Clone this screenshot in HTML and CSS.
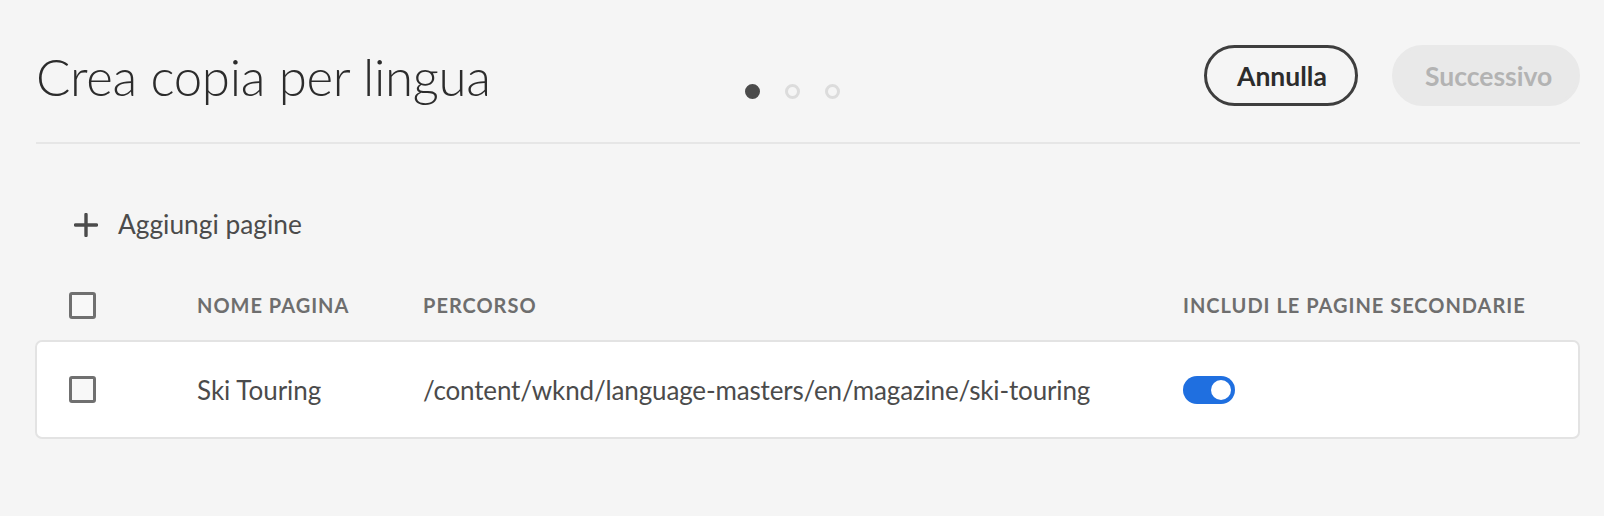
FILE: index.html
```html
<!DOCTYPE html>
<html lang="it">
<head>
<meta charset="utf-8">
<title>Crea copia per lingua</title>
<link rel="stylesheet" href="styles.css">
</head>
<body>
<div class="page">
  <header class="header">
    <h1 class="title">Crea copia per lingua</h1>
    <div class="steps">
      <span class="step step-active"></span>
      <span class="step"></span>
      <span class="step"></span>
    </div>
    <div class="actions">
      <button class="btn btn-outline">Annulla</button>
      <button class="btn btn-disabled" disabled>Successivo</button>
    </div>
  </header>
  <div class="divider"></div>

  <button class="add-pages">
    <svg class="add-icon" viewBox="0 0 24 24" width="24" height="24" aria-hidden="true">
      <path d="M12 1.5v21M1.5 12h21" stroke="#4b4b4b" stroke-width="3.4" stroke-linecap="round" fill="none"/>
    </svg>
    <span>Aggiungi pagine</span>
  </button>

  <div class="table">
    <div class="row row-head">
      <div class="cell cell-check"><span class="checkbox"></span></div>
      <div class="cell">NOME PAGINA</div>
      <div class="cell">PERCORSO</div>
      <div class="cell">INCLUDI LE PAGINE SECONDARIE</div>
    </div>
    <div class="row row-body">
      <div class="cell cell-check"><span class="checkbox"></span></div>
      <div class="cell">Ski Touring</div>
      <div class="cell cell-path">/content/wknd/language-masters/en/magazine/ski-touring</div>
      <div class="cell"><span class="switch"><span class="switch-knob"></span></span></div>
    </div>
  </div>
</div>
</body>
</html>
```

FILE: styles.css
```css
* { box-sizing: border-box; }

html, body {
  margin: 0;
  padding: 0;
  background: #f5f5f5;
}

body {
  font-family: Lato, "Open Sans", "Liberation Sans", sans-serif;
  color: #4b4b4b;
}

.page {
  padding: 45px 24px 0 35px;
}

.header {
  display: flex;
  align-items: flex-start;
}

.title {
  margin: 1px 0 0 1px;
  font-weight: 300;
  font-size: 51px;
  line-height: 62px;
  color: #2c2c2c;
  letter-spacing: -0.3px;
}

.steps {
  display: flex;
  gap: 25px;
  margin: 39px 0 0 254px;
}

.step {
  width: 15px;
  height: 15px;
  border-radius: 50%;
  border: 3px solid #dcdcdc;
}

.step-active {
  background: #4b4b4b;
  border-color: #4b4b4b;
}

.actions {
  margin-left: auto;
  display: flex;
  gap: 34px;
}

.btn {
  height: 61px;
  border-radius: 31px;
  font-family: Lato, "Open Sans", sans-serif;
  font-weight: 700;
  font-size: 26.5px;
  padding: 0 30px;
  border: 3px solid transparent;
}

.btn-outline {
  width: 154px;
  background: transparent;
  border-color: #3e3e3e;
  color: #2c2c2c;
}

.btn-disabled {
  width: 188px;
  background: #e9e9e9;
  border-color: #e9e9e9;
  color: #b3b3b3;
}

.divider {
  height: 2px;
  margin: 34px 0 0 1px;
  background: #e6e6e6;
}

.add-pages {
  display: flex;
  align-items: center;
  gap: 20px;
  margin: 64px 0 0 39px;
  padding: 0;
  border: 0;
  background: transparent;
  font-family: Lato, "Open Sans", sans-serif;
  font-size: 26.3px;
  line-height: 32px;
  color: #4b4b4b;
}

.add-icon {
  display: block;
  margin-top: 1px;
}

.table {
  margin-top: 41px;
}

.row {
  display: grid;
  grid-template-columns: 160px 226px 760px 1fr;
  align-items: center;
  border: 2px solid transparent;
}

.row-head {
  height: 48px;
  font-weight: 700;
  font-size: 20px;
  letter-spacing: 0.05em;
  color: #6e6e6e;
}

.row-body {
  margin-top: 11px;
  height: 99px;
  background: #ffffff;
  border-color: #e3e3e3;
  border-radius: 7px;
  font-size: 26px;
  color: #4b4b4b;
}

.cell-path {
  letter-spacing: -0.15px;
}

.cell-check {
  padding-left: 32px;
  display: flex;
  align-items: center;
}

.checkbox {
  display: block;
  width: 27px;
  height: 27px;
  border: 3px solid #707070;
  border-radius: 3px;
  background: #f8f8f8;
}

.switch {
  display: flex;
  align-items: center;
  justify-content: flex-end;
  width: 52px;
  height: 28px;
  border-radius: 14px;
  background: #1f6fe0;
  padding-right: 4px;
}

.switch-knob {
  display: block;
  width: 20px;
  height: 20px;
  border-radius: 50%;
  background: #ffffff;
}
```
